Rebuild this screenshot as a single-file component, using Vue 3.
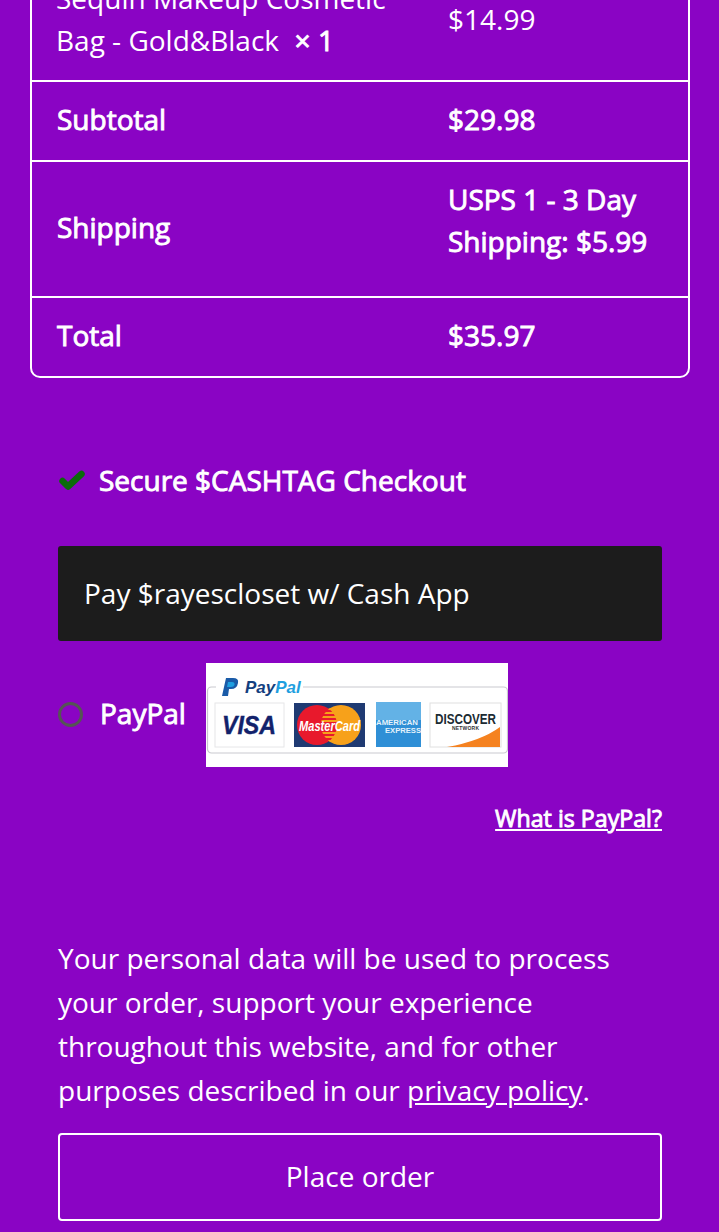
<template>
  <div class="page">
    <div class="totals">
      <div class="row row--item">
        <div class="product">Sequin Makeup Cosmetic Bag - Gold&amp;Black&nbsp; <span class="qty">× 1</span></div>
        <div class="price">$14.99</div>
      </div>
      <div v-for="row in rows" :key="row.label" class="row" :class="{ 'row--tall': row.tall }">
        <div class="label">{{ row.label }}</div>
        <div class="label">{{ row.value }}</div>
      </div>
    </div>

    <div class="checkout">
      <div class="secure">
        <svg class="check" viewBox="0 0 26 22" width="26" height="22">
          <path d="M3.500 11 L9 16.500 L22.500 4" fill="none" stroke="#0b6b0b" stroke-width="6.5" stroke-linejoin="round" stroke-linecap="round" />
        </svg>
        <span class="secure-text">Secure $CASHTAG Checkout</span>
      </div>
      <div class="pay-box">Pay $rayescloset w/ Cash App</div>
      <div class="paypal">
        <span class="radio"></span>
        <span class="paypal-label">PayPal</span>
        <svg class="logos" viewBox="0 0 302 104" width="302" height="104">
          <defs>
            <clipPath id="mc-overlap"><circle cx="135" cy="62" r="20" /></clipPath>
          </defs>
          <rect width="302" height="104" fill="#fff" />
          <rect x="1.500" y="24" width="300" height="66" rx="4" fill="#fff" stroke="#c9c9cf" stroke-width="1.2" />
          <rect x="10" y="16" width="87" height="16" fill="#fff" />
          <path d="M20 15 H27 Q33 15 32 20 Q31 26 25 26 H23 L22 33 H16 Z" fill="#1a5ba8" />
          <path d="M22 19 H26 Q29 19 28.500 22 Q28 24 25 24 H21 Z" fill="#1f9fe0" />
          <text x="39" y="30" class="pp-text"><tspan fill="#143f7f">Pay</tspan><tspan fill="#1f9fe0">Pal</tspan></text>

          <rect x="9" y="40" width="69" height="44" fill="#fff" stroke="#e6e6e8" />
          <text x="16" y="71" class="visa" textLength="54" lengthAdjust="spacingAndGlyphs">VISA</text>

          <rect x="88" y="40" width="71" height="44" fill="#1f3a72" />
          <circle cx="135" cy="62" r="20" fill="#f7a11a" />
          <circle cx="111" cy="62" r="20" fill="#e8192c" />
          <g clip-path="url(#mc-overlap)" stroke="#f7a11a" stroke-width="2">
            <path d="M114 46 H132 M114 50 H132 M114 54 H132 M114 58 H132 M114 70 H132 M114 74 H132 M114 78 H132" />
          </g>
          <text x="93" y="68" class="mc" textLength="61" lengthAdjust="spacingAndGlyphs">MasterCard</text>

          <rect x="170" y="39" width="45" height="45" fill="#2f8fd6" />
          <rect x="170" y="39" width="45" height="18" fill="#63b2e6" />
          <text x="170" y="62" class="amex" textLength="42" lengthAdjust="spacingAndGlyphs">AMERICAN</text>
          <text x="179" y="70" class="amex" textLength="36" lengthAdjust="spacingAndGlyphs">EXPRESS</text>

          <rect x="224" y="40" width="71" height="44" fill="#fff" stroke="#e0e0e0" />
          <path d="M241 84 Q275 78 294 64 V84 Z" fill="#f58220" />
          <text x="229" y="61" class="disc" textLength="61" lengthAdjust="spacingAndGlyphs">DISCOVER</text>
          <text x="246" y="67" class="net" textLength="27">NETWORK</text>
        </svg>
      </div>
      <div class="what-row"><a class="what" href="#">What is PayPal?</a></div>
      <p class="privacy">
        Your personal data will be used to process your order, support your experience throughout this website, and for other purposes described in our <a href="#">privacy policy</a>.
      </p>
      <button class="place" type="button">Place order</button>
    </div>
  </div>
</template>

<script setup>
const rows = [
  { label: "Subtotal", value: "$29.98" },
  { label: "Shipping", value: "USPS 1 - 3 Day Shipping: $5.99", tall: true },
  { label: "Total", value: "$35.97" },
];
</script>

<style>
html,
body {
  margin: 0;
  background: #8a04c4;
}
</style>

<style scoped>
.page {
  height: 1232px;
  overflow: hidden;
  box-sizing: border-box;
  padding: 0 29px 0 30px;
  background: #8a04c4;
  color: #fff;
  font-family: "Open Sans", sans-serif;
  font-size: 28px;
  line-height: 44px;
}

.totals {
  margin-top: -45px;
  border: 2px solid #fff;
  border-radius: 10px;
}

.row {
  display: grid;
  grid-template-columns: 392px 1fr;
  align-items: center;
  min-height: 78px;
  padding: 0 24px;
  border-top: 2px solid #fff;
}

.row:first-child {
  border-top: 0;
}

.row--tall {
  min-height: 134px;
}

.row--item {
  padding: 20px 24px 19px;
  line-height: 42px;
}

.product {
  padding-right: 56px;
}

.qty {
  margin-left: 1px;
}

/* the bold here is the regular cut thickened, so it keeps the regular widths */
.label,
.qty,
.secure-text,
.paypal-label,
.what {
  -webkit-text-stroke: 0.9px #fff;
}

.label {
  padding: 0 0 4px 1px;
  line-height: 42px;
}

.label:last-child {
  padding-left: 0;
}

.row--tall .label:last-child {
  align-self: start;
  padding: 16px 0 0;
}

.checkout {
  padding: 0 28px;
}

.secure {
  display: flex;
  align-items: center;
  gap: 14px;
  margin-top: 80px;
  padding-left: 1px;
}

.secure-text {
  padding-bottom: 2px;
}

.pay-box {
  display: flex;
  align-items: center;
  box-sizing: border-box;
  height: 95px;
  margin-top: 42px;
  padding: 0 26px 2px;
  border-radius: 3px;
  background: #1c1c1c;
}

.paypal {
  display: flex;
  align-items: center;
  margin-top: 22px;
}

.radio {
  box-sizing: border-box;
  width: 25px;
  height: 25px;
  margin: 0 17px 1px 0;
  border: 3px solid #555;
  border-radius: 50%;
}

.paypal-label {
  margin-right: 20px;
  padding-bottom: 4px;
}

.logos {
  display: block;
}

.pp-text {
  font: italic 700 17px "Liberation Sans", sans-serif;
}

.visa {
  fill: #12226b;
  stroke: #12226b;
  stroke-width: 0.4px;
  font: italic 700 25px "Liberation Sans", sans-serif;
}

.mc {
  fill: #fff;
  font: italic 700 14px "Liberation Sans", sans-serif;
}

.amex {
  fill: #e4f2fb;
  font: 700 8px "Liberation Sans", sans-serif;
}

.disc {
  fill: #1c2b33;
  font: 700 14px "Liberation Sans", sans-serif;
}

.net {
  fill: #333;
  font: 700 5px "Liberation Sans", sans-serif;
}

.what-row {
  display: flex;
  justify-content: flex-end;
  margin-top: 29px;
}

.what {
  color: #fff;
  font-size: 23.2px;
}

.privacy {
  margin: 96px 0 0;
}

.privacy a {
  color: #fff;
}

.place {
  display: block;
  box-sizing: border-box;
  width: 100%;
  height: 88px;
  margin-top: 21px;
  padding: 0 0 2px;
  border: 2px solid #fff;
  border-radius: 4px;
  background: transparent;
  color: #fff;
  font: inherit;
}
</style>
